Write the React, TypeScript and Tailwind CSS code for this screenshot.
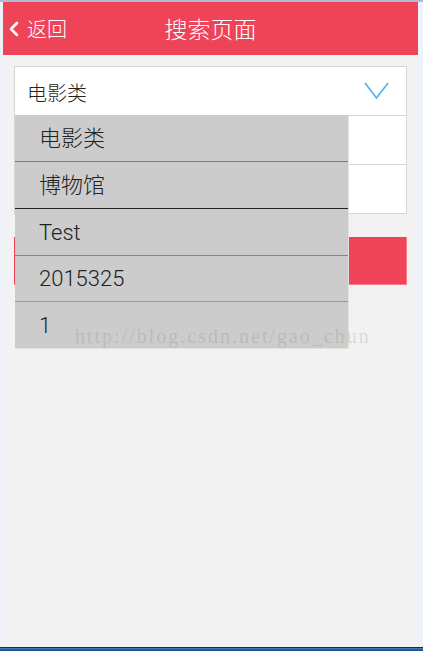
import React from "react";

const cjk = { fontFamily: '"Noto Sans CJK SC", "Noto Sans", sans-serif' };

export default function App() {
  const items = [
    { label: "电影类", cls: "h-[47px] border-b border-[#7a7a7a]" },
    { label: "博物馆", cls: "h-[47px] border-b border-[#222222]" },
    { label: "Test", cls: "h-[47px] border-b border-[#858585]" },
    { label: "2015325", cls: "h-[46px] border-b border-[#9a9a9a]" },
    { label: "1", cls: "h-[46px]" },
  ];
  return (
    <div className="w-[423px] h-[651px] flex flex-col bg-[#edf2fa] overflow-hidden" style={cjk}>
      <div className="h-[2px] bg-[#aebbd3] shrink-0" />
      <div className="flex-1 flex flex-col ml-[3px] mr-[5px] min-h-0">
        <div className="h-[53px] shrink-0 bg-[#ef4358] relative flex items-center text-white">
          <div className="flex items-center pl-[5px] gap-[7px] absolute left-0 top-0 bottom-0">
            <svg width="12" height="18" viewBox="0 0 12 18">
              <path d="M9 3 L3 9 L9 15" stroke="white" strokeWidth="2.6" fill="none" strokeLinecap="round" strokeLinejoin="round" />
            </svg>
            <span className="text-[20px] font-light leading-none">返回</span>
          </div>
          <div className="flex-1 text-center text-[23px] font-light leading-none">搜索页面</div>
        </div>
        <div className="flex-1 bg-[#f2f2f2] relative px-[11px] pt-[11px]">
          <div className="border border-[#d6d6d6] bg-white">
            <div className="h-[49px] flex items-center justify-between pl-[12px] pr-[17px] border-b border-[#d6d6d6]">
              <span className="text-[20px] font-light text-[#222] pt-[4px]">电影类</span>
              <svg width="25" height="18" viewBox="0 0 25 18">
                <path d="M1 1 L12.5 16 L24 1" stroke="#45b3ef" strokeWidth="1.6" fill="none" />
              </svg>
            </div>
            <div className="h-[49px] border-b border-[#d6d6d6]" />
            <div className="h-[48px]" />
          </div>
          <div className="mt-[23px] h-[48px] bg-[#ef4358] border-r border-b border-[#f47c8a]" />

          <div className="absolute left-[12px] top-[60px] w-[333px] bg-[#cccccc] shadow-[1px_1px_0_#e2e2e2]">
            {items.map((it, i) => (
              <div
                key={i}
                className={`flex items-center pl-[24px] text-[22px] font-light text-[#222] ${it.cls}`}
                style={{ fontFamily: '"Roboto", "Noto Sans CJK SC", sans-serif' }}
              >
                {it.label}
              </div>
            ))}
          </div>

          <div
            className="absolute left-[72px] top-[271px] text-[20px] tracking-[2px] text-[rgba(120,112,80,0.2)] pointer-events-none leading-none"
            style={{ fontFamily: '"Liberation Serif", serif' }}
          >
            http://blog.csdn.net/gao_chun
          </div>
        </div>
      </div>
      <div className="h-[1px] bg-[#11304e] shrink-0" />
      <div className="h-[3px] bg-gradient-to-b from-[#4d7eb0] to-[#0f4a7e] shrink-0" />
    </div>
  );
}
